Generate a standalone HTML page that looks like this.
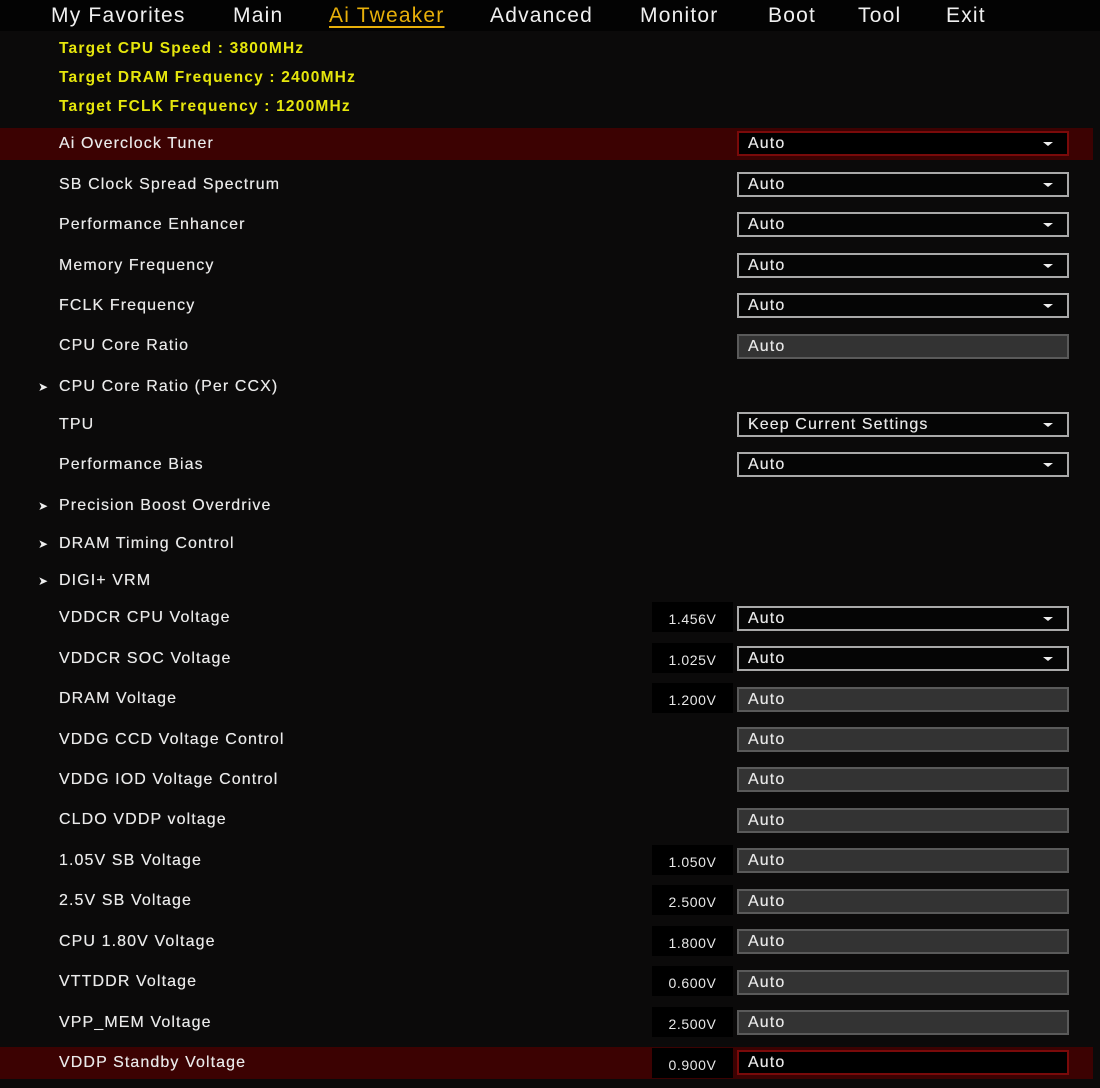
<!DOCTYPE html>
<html><head><meta charset="utf-8"><style>
body{margin:0;width:1100px;height:1088px;background:#0b0a0a;font-family:"Liberation Sans",sans-serif;color:#e8e8e8;overflow:hidden;position:relative}
.nav{position:absolute;left:0;top:0;width:1100px;height:31px;background:#030303}
.nav span{position:absolute;top:4px;font-size:21px;color:#f0f0f0;letter-spacing:1.2px}
.nav .act{color:#e8b00a;text-decoration:underline;text-underline-offset:4px;text-decoration-thickness:2px}
.y{position:absolute;left:59px;font-size:15.5px;font-weight:bold;color:#e6e60c;letter-spacing:1.2px}
.l{position:absolute;left:59px;font-size:16px;letter-spacing:1.1px;color:#eaeaea;line-height:18px;margin-top:2px;text-shadow:0 0 0.4px #eaeaea}
.ar{position:absolute;left:38px;font-size:12px;color:#eee;line-height:18px;margin-top:2px}
.hl{position:absolute;left:0;width:1093px;height:32px;background:#3c0202}
.dd{position:absolute;left:737px;width:328px;height:21px;border:2px solid #a9a9a9;background:#050505;font-size:16px;letter-spacing:1.1px;line-height:21px;box-sizing:content-box;text-shadow:0 0 0.4px #eee}
.dd span{margin-left:9px}
.dd i{position:absolute;right:14px;top:9px;width:0;height:0;border-left:5px solid transparent;border-right:5px solid transparent;border-top:4px solid #eee}
.gr{background:#333;border-color:#5a5a5a}
.sel{border-color:#7a0a0a;background:#000}
.v{position:absolute;left:652px;width:81px;height:30px;background:#000;font-size:14px;letter-spacing:0.6px;line-height:30px;text-align:center;padding-top:2px;box-sizing:border-box}
</style></head><body>
<div class="nav">
<span style="left:51px">My Favorites</span>
<span style="left:233px">Main</span>
<span class="act" style="left:329px">Ai Tweaker</span>
<span style="left:490px">Advanced</span>
<span style="left:640px">Monitor</span>
<span style="left:768px">Boot</span>
<span style="left:858px">Tool</span>
<span style="left:946px">Exit</span>
</div>
<div class="y" style="top:40px">Target CPU Speed : 3800MHz</div>
<div class="y" style="top:69px">Target DRAM Frequency : 2400MHz</div>
<div class="y" style="top:98px">Target FCLK Frequency : 1200MHz</div>

<div class="hl" style="top:128px"></div>
<div class="hl" style="top:1047px"></div>

<div class="l" style="top:133px">Ai Overclock Tuner</div>
<div class="dd sel" style="top:131px"><span>Auto</span><i></i></div>
<div class="l" style="top:174px">SB Clock Spread Spectrum</div>
<div class="dd" style="top:172px"><span>Auto</span><i></i></div>
<div class="l" style="top:214px">Performance Enhancer</div>
<div class="dd" style="top:212px"><span>Auto</span><i></i></div>
<div class="l" style="top:255px">Memory Frequency</div>
<div class="dd" style="top:253px"><span>Auto</span><i></i></div>
<div class="l" style="top:295px">FCLK Frequency</div>
<div class="dd" style="top:293px"><span>Auto</span><i></i></div>
<div class="l" style="top:335px">CPU Core Ratio</div>
<div class="dd gr" style="top:334px"><span>Auto</span></div>
<div class="ar" style="top:376px">➤</div><div class="l" style="top:376px">CPU Core Ratio (Per CCX)</div>
<div class="l" style="top:414px">TPU</div>
<div class="dd" style="top:412px"><span>Keep Current Settings</span><i></i></div>
<div class="l" style="top:454px">Performance Bias</div>
<div class="dd" style="top:452px"><span>Auto</span><i></i></div>
<div class="ar" style="top:495px">➤</div><div class="l" style="top:495px">Precision Boost Overdrive</div>
<div class="ar" style="top:533px">➤</div><div class="l" style="top:533px">DRAM Timing Control</div>
<div class="ar" style="top:570px">➤</div><div class="l" style="top:570px">DIGI+ VRM</div>

<div class="l" style="top:607px">VDDCR CPU Voltage</div>
<div class="v" style="top:602px">1.456V</div>
<div class="dd" style="top:606px"><span>Auto</span><i></i></div>
<div class="l" style="top:648px">VDDCR SOC Voltage</div>
<div class="v" style="top:643px">1.025V</div>
<div class="dd" style="top:646px"><span>Auto</span><i></i></div>
<div class="l" style="top:688px">DRAM Voltage</div>
<div class="v" style="top:683px">1.200V</div>
<div class="dd gr" style="top:687px"><span>Auto</span></div>
<div class="l" style="top:729px">VDDG CCD Voltage Control</div>
<div class="dd gr" style="top:727px"><span>Auto</span></div>
<div class="l" style="top:769px">VDDG IOD Voltage Control</div>
<div class="dd gr" style="top:767px"><span>Auto</span></div>
<div class="l" style="top:809px">CLDO VDDP voltage</div>
<div class="dd gr" style="top:808px"><span>Auto</span></div>
<div class="l" style="top:850px">1.05V SB Voltage</div>
<div class="v" style="top:845px">1.050V</div>
<div class="dd gr" style="top:848px"><span>Auto</span></div>
<div class="l" style="top:890px">2.5V SB Voltage</div>
<div class="v" style="top:885px">2.500V</div>
<div class="dd gr" style="top:889px"><span>Auto</span></div>
<div class="l" style="top:931px">CPU 1.80V Voltage</div>
<div class="v" style="top:926px">1.800V</div>
<div class="dd gr" style="top:929px"><span>Auto</span></div>
<div class="l" style="top:971px">VTTDDR Voltage</div>
<div class="v" style="top:966px">0.600V</div>
<div class="dd gr" style="top:970px"><span>Auto</span></div>
<div class="l" style="top:1012px">VPP_MEM Voltage</div>
<div class="v" style="top:1007px">2.500V</div>
<div class="dd gr" style="top:1010px"><span>Auto</span></div>
<div class="l" style="top:1052px">VDDP Standby Voltage</div>
<div class="v" style="top:1048px">0.900V</div>
<div class="dd sel" style="top:1050px"><span>Auto</span></div>
</body></html>
